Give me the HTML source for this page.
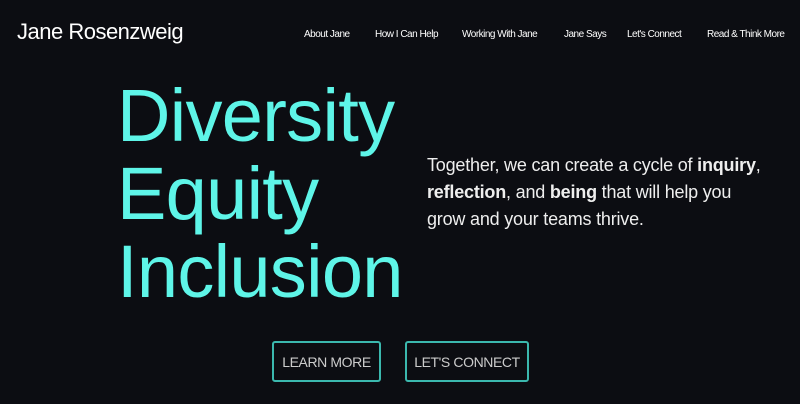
<!DOCTYPE html>
<html><head><style>
body{margin:0;width:800px;height:404px;background:#0c0d12;font-family:"Liberation Sans",sans-serif;overflow:hidden;position:relative;color:#fff}
.logo{position:absolute;left:17px;top:19px;font-size:22px;letter-spacing:-0.5px}
.nav a{position:absolute;top:29px;font-size:10px;color:#fff;letter-spacing:-0.5px;white-space:nowrap}
.big{position:absolute;left:117px;font-size:74px;color:#5ef5e8;line-height:1;letter-spacing:-0.7px}
.p{position:absolute;left:427px;top:152px;width:342px;font-size:18px;line-height:27px;color:#eee;letter-spacing:-0.2px}
.p b{font-weight:bold}
.btn{position:absolute;top:341px;height:41px;border:2px solid #3bb8ae;border-radius:3px;box-sizing:border-box;color:#ccc;font-size:14px;letter-spacing:-0.4px;display:flex;align-items:center;justify-content:center}
</style></head><body>
<div class="logo">Jane Rosenzweig</div>
<div class="nav">
<a style="left:304px">About Jane</a>
<a style="left:375px">How I Can Help</a>
<a style="left:462px">Working With Jane</a>
<a style="left:564px">Jane Says</a>
<a style="left:627px">Let's Connect</a>
<a style="left:707px">Read &amp; Think More</a>
</div>
<div class="big" style="top:79px">Diversity</div>
<div class="big" style="top:157px">Equity</div>
<div class="big" style="top:235px">Inclusion</div>
<div class="p">Together, we can create a cycle of <b>inquiry</b>, <b>reflection</b>, and <b>being</b> that will help you grow and your teams thrive.</div>
<div class="btn" style="left:272px;width:109px">LEARN MORE</div>
<div class="btn" style="left:405px;width:124px">LET'S CONNECT</div>
</body></html>
